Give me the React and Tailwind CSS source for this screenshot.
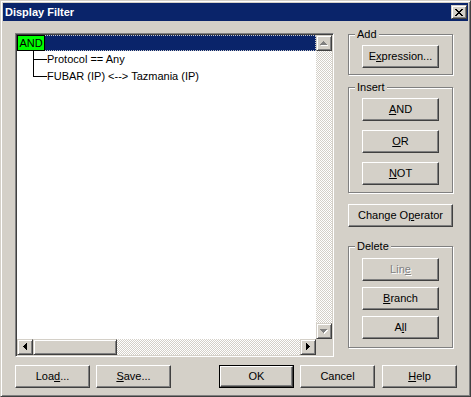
import React from 'react';

const arrows = {
  up: [[3, 0, 1, 1], [2, 1, 3, 1], [1, 2, 5, 1], [0, 3, 7, 1]],
  down: [[0, 0, 7, 1], [1, 1, 5, 1], [2, 2, 3, 1], [3, 3, 1, 1]],
  left: [[3, 0, 1, 7], [2, 1, 1, 5], [1, 2, 1, 3], [0, 3, 1, 1]],
  right: [[0, 0, 1, 7], [1, 1, 1, 5], [2, 2, 1, 3], [3, 3, 1, 1]],
};

const closeX = [
  [0, 0, 2, 1], [6, 0, 2, 1],
  [1, 1, 2, 1], [5, 1, 2, 1],
  [2, 2, 4, 1],
  [3, 3, 2, 1],
  [2, 4, 4, 1],
  [1, 5, 2, 1], [5, 5, 2, 1],
  [0, 6, 2, 1], [6, 6, 2, 1],
];

function Pixels({ rows, color, dx = 0, dy = 0 }) {
  return rows.map(([x, y, w, h], i) => (
    <rect key={i} x={x + dx} y={y + dy} width={w} height={h} fill={color} />
  ));
}

function Arrow({ dir, disabled }) {
  const vert = dir === 'up' || dir === 'down';
  return (
    <svg width={vert ? 8 : 5} height={vert ? 5 : 8} shapeRendering="crispEdges">
      {disabled && <Pixels rows={arrows[dir]} color="#ffffff" dx={1} dy={1} />}
      <Pixels rows={arrows[dir]} color={disabled ? '#808080' : '#000000'} />
    </svg>
  );
}

function ScrollBtn({ dir, disabled }) {
  return (
    <div className="w-[16px] h-[16px] shrink-0 flex items-center justify-center bg-[#d4d0c8] border border-t-[#d4d0c8] border-l-[#d4d0c8] border-r-[#404040] border-b-[#404040] shadow-[inset_1px_1px_#ffffff,inset_-1px_-1px_#808080]">
      <Arrow dir={dir} disabled={disabled} />
    </div>
  );
}

function Btn({ children, className = '', disabled }) {
  return (
    <button
      type="button"
      className={`h-[23px] shrink-0 flex items-center justify-center bg-[#d4d0c8] border border-t-white border-l-white border-r-[#404040] border-b-[#404040] shadow-[inset_-1px_-1px_#808080] text-[11px] leading-[13px] ${
        disabled ? 'text-[#808080] [text-shadow:1px_1px_0_#ffffff]' : 'text-black'
      } ${className}`}
    >
      {children}
    </button>
  );
}

function Group({ label, className = '', children }) {
  return (
    <div className={`relative w-[105px] flex flex-col items-center border border-[#808080] shadow-[1px_1px_#ffffff,inset_1px_1px_#ffffff] ${className}`}>
      <span className="absolute -top-[7px] left-[6px] px-[2px] bg-[#d4d0c8] text-[11px] leading-[13px]">{label}</span>
      {children}
    </div>
  );
}

const U = ({ children }) => <span className="underline underline-offset-[1px]">{children}</span>;

const checker = 'bg-[image:repeating-conic-gradient(#d4d0c8_0_25%,#ffffff_0_50%)] bg-[length:2px_2px]';

function TreeRow({ last, children }) {
  return (
    <div className="flex h-[17px] items-stretch">
      <div className="w-[16px] shrink-0" />
      <div className={`w-[14px] shrink-0 ${last ? '' : 'border-l border-black'}`}>
        <div className={`h-[9px] border-b border-black ${last ? 'border-l' : ''}`} />
      </div>
      <span className="leading-[17px] whitespace-nowrap">{children}</span>
    </div>
  );
}

export default function App() {
  return (
    <div className="w-[471px] h-[397px] flex flex-col bg-[#d4d0c8] p-[2px] border border-t-[#d4d0c8] border-l-[#d4d0c8] border-r-[#404040] border-b-[#404040] shadow-[inset_1px_1px_#ffffff,inset_-1px_-1px_#808080] font-['Liberation_Sans',Arial,sans-serif] text-[11px] text-black select-none">
      <div className="h-[18px] shrink-0 flex items-center bg-[#0a246a] pl-[2px] pr-[1px]">
        <span className="font-bold text-white text-[11px] leading-[13px]">Display Filter</span>
        <div className="ml-auto w-[16px] h-[14px] flex items-center justify-center bg-[#d4d0c8] border border-t-[#d4d0c8] border-l-[#d4d0c8] border-r-[#404040] border-b-[#404040] shadow-[inset_1px_1px_#ffffff,inset_-1px_-1px_#808080]">
          <svg width="8" height="7" shapeRendering="crispEdges">
            <Pixels rows={closeX} color="#000000" />
          </svg>
        </div>
      </div>

      <div className="flex items-start pt-[12px] pl-[12px]">
        <div className="w-[319px] h-[324px] shrink-0 p-[1px] bg-[#d4d0c8] border border-t-[#808080] border-l-[#808080] border-r-white border-b-white shadow-[inset_1px_1px_#404040,inset_-1px_-1px_#d4d0c8]">
          <div className="w-full h-full grid grid-cols-[1fr_16px] grid-rows-[1fr_16px]">
            <div className="bg-white overflow-hidden">
              <div className="flex h-[16px]">
                <div className="w-[28px] shrink-0 flex items-center justify-center bg-[#00ff00] border border-black leading-[13px]">AND</div>
                <div className="flex-1 bg-[#0a246a] border-y border-r border-dotted border-[#c8c8c8]" />
              </div>
              <TreeRow>Protocol == Any</TreeRow>
              <TreeRow last>FUBAR (IP) &lt;--&gt; Tazmania (IP)</TreeRow>
            </div>
            <div className="flex flex-col">
              <ScrollBtn dir="up" disabled />
              <div className={`flex-1 ${checker}`} />
              <ScrollBtn dir="down" disabled />
            </div>
            <div className="flex">
              <ScrollBtn dir="left" />
              <div className="w-[84px] shrink-0 bg-[#d4d0c8] border border-t-[#d4d0c8] border-l-[#d4d0c8] border-r-[#404040] border-b-[#404040] shadow-[inset_1px_1px_#ffffff,inset_-1px_-1px_#808080]" />
              <div className={`flex-1 ${checker}`} />
              <ScrollBtn dir="right" />
            </div>
            <div className="bg-[#d4d0c8]" />
          </div>
        </div>

        <div className="ml-[14px] flex flex-col">
          <Group label="Add" className="mt-[1px] pt-[10px] pb-[6px]">
            <Btn className="w-[77px]">E<U>x</U>pression...</Btn>
          </Group>
          <Group label="Insert" className="mt-[12px] pt-[10px] pb-[7px] gap-[9px]">
            <Btn className="w-[77px]"><U>A</U>ND</Btn>
            <Btn className="w-[77px]"><U>O</U>R</Btn>
            <Btn className="w-[77px]"><U>N</U>OT</Btn>
          </Group>
          <Btn className="w-[105px] mt-[11px]">Change O<U>p</U>erator</Btn>
          <Group label="Delete" className="mt-[19px] pt-[11px] pb-[8px] gap-[6px]">
            <Btn className="w-[77px]" disabled>Lin<U>e</U></Btn>
            <Btn className="w-[77px]"><U>B</U>ranch</Btn>
            <Btn className="w-[77px]">A<U>l</U>l</Btn>
          </Group>
        </div>
      </div>

      <div className="flex mt-[8px] pl-[12px]">
        <Btn className="w-[75px]">Loa<U>d</U>...</Btn>
        <Btn className="w-[75px] ml-[6px]"><U>S</U>ave...</Btn>
        <div className="w-[75px] h-[23px] ml-[48px] border border-black">
          <Btn className="w-full h-full">OK</Btn>
        </div>
        <Btn className="w-[75px] ml-[6px]">Cancel</Btn>
        <Btn className="w-[75px] ml-[7px]"><U>H</U>elp</Btn>
      </div>
    </div>
  );
}
